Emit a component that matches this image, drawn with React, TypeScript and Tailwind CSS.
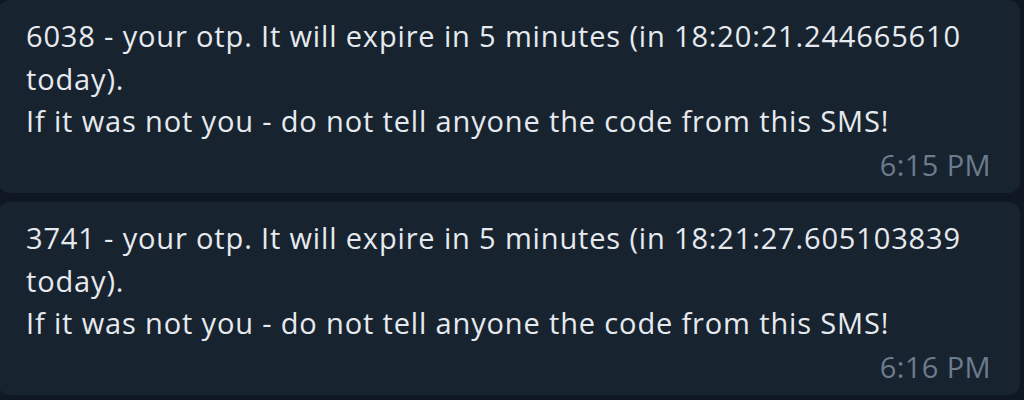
import React from "react";

const msgs = [
  {
    l1: "6038 - your otp. It will expire in 5 minutes (in 18:20:21.244665610 today).",
    time: "6:15 PM",
  },
  {
    l1: "3741 - your otp. It will expire in 5 minutes (in 18:21:27.605103839 today).",
    time: "6:16 PM",
  },
];

export default function App() {
  return (
    <div
      className="h-[400px] w-[1024px] overflow-hidden bg-[#0f1822]"
      style={{ fontFamily: '"Open Sans", sans-serif' }}
    >
      <div className="-ml-[2px] flex w-[1022px] flex-col gap-[9px]">
        {msgs.map((m, i) => (
          <div
            key={i}
            className="rounded-[12px] bg-[#182330] pl-[28px] pr-[29px] pt-[15px] pb-[7px]"
          >
            <div className="w-[965px] text-[29px] leading-[42.5px] tracking-[0.85px] text-[#e6eaee]">
              <div>{m.l1}</div>
              <div>If it was not you - do not tell anyone the code from this SMS!</div>
            </div>
            <div className="mt-[1px] text-right text-[29px] leading-[42.5px] tracking-[0.4px] text-[#6b7c8c]">
              {m.time}
            </div>
          </div>
        ))}
      </div>
    </div>
  );
}
